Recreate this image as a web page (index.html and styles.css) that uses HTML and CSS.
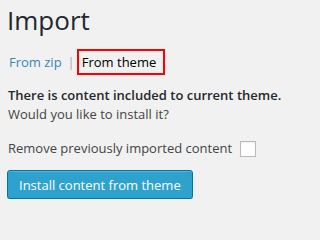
FILE: index.html
```html
<!DOCTYPE html>
<html>
<head>
<meta charset="utf-8">
<link rel="stylesheet" href="styles.css">
</head>
<body>
<div class="wrap">
  <h1 class="title">Import</h1>
  <div class="tabs">
    <a class="tab" href="#">From zip</a>
    <span class="sep">|</span>
    <span class="tab current">From theme</span>
  </div>
  <p class="msg"><strong>There is content included to current theme.</strong><br>Would you like to install it?</p>
  <label class="opt">Remove previously imported content <span class="check"></span></label>
  <button class="btn" type="button">Install content from theme</button>
</div>
</body>
</html>
```
FILE: styles.css
```css
html, body {
  margin: 0;
  padding: 0;
  background: #f1f1f1;
}
body {
  font-family: "Open Sans", "Noto Sans", sans-serif;
  color: #444;
  font-size: 13px;
}
.wrap {
  padding: 0 7px;
  display: flex;
  flex-direction: column;
  align-items: flex-start;
}
.title {
  margin: 0;
  padding-top: 4px;
  font-size: 26px;
  line-height: 32px;
  font-weight: 400;
  color: #23282d;
}
.tabs {
  margin-top: 13px;
  display: flex;
  align-items: center;
  font-size: 13px;
  line-height: 22px;
}
.tab {
  color: #3685b5;
  text-decoration: none;
  padding-left: 2px;
}
.sep {
  color: #b3a3a8;
  margin: 0 2px 0 6px;
}
.current {
  color: #000;
  border: 2px solid #f00;
  padding: 0 7px 0 3px;
  line-height: 22px;
}
.msg {
  margin: 11px 0 0;
  line-height: 19px;
  font-size: 13px;
  padding-left: 1px;
}
.msg strong {
  font-weight: 600;
  color: #23282d;
}
.opt {
  margin-top: 15px;
  display: flex;
  align-items: center;
  padding-left: 1px;
  font-size: 13px;
  height: 18px;
}
.check {
  display: inline-block;
  width: 14px;
  height: 14px;
  border: 1px solid #bbb;
  background: #fff;
  margin-left: 8px;
  margin-top: 2px;
  box-shadow: inset 0 1px 2px rgba(0,0,0,.07);
}
.btn {
  margin-top: 13px;
  height: 29px;
  padding: 0 11px;
  font-family: "Open Sans", "Noto Sans", sans-serif;
  font-size: 13px;
  color: #fff;
  background: #2ea2cc;
  border: 1px solid #0074a2;
  border-radius: 3px;
  box-shadow: inset 0 1px 0 rgba(120,200,230,.5), 0 1px 0 rgba(0,0,0,.15);
}
```
